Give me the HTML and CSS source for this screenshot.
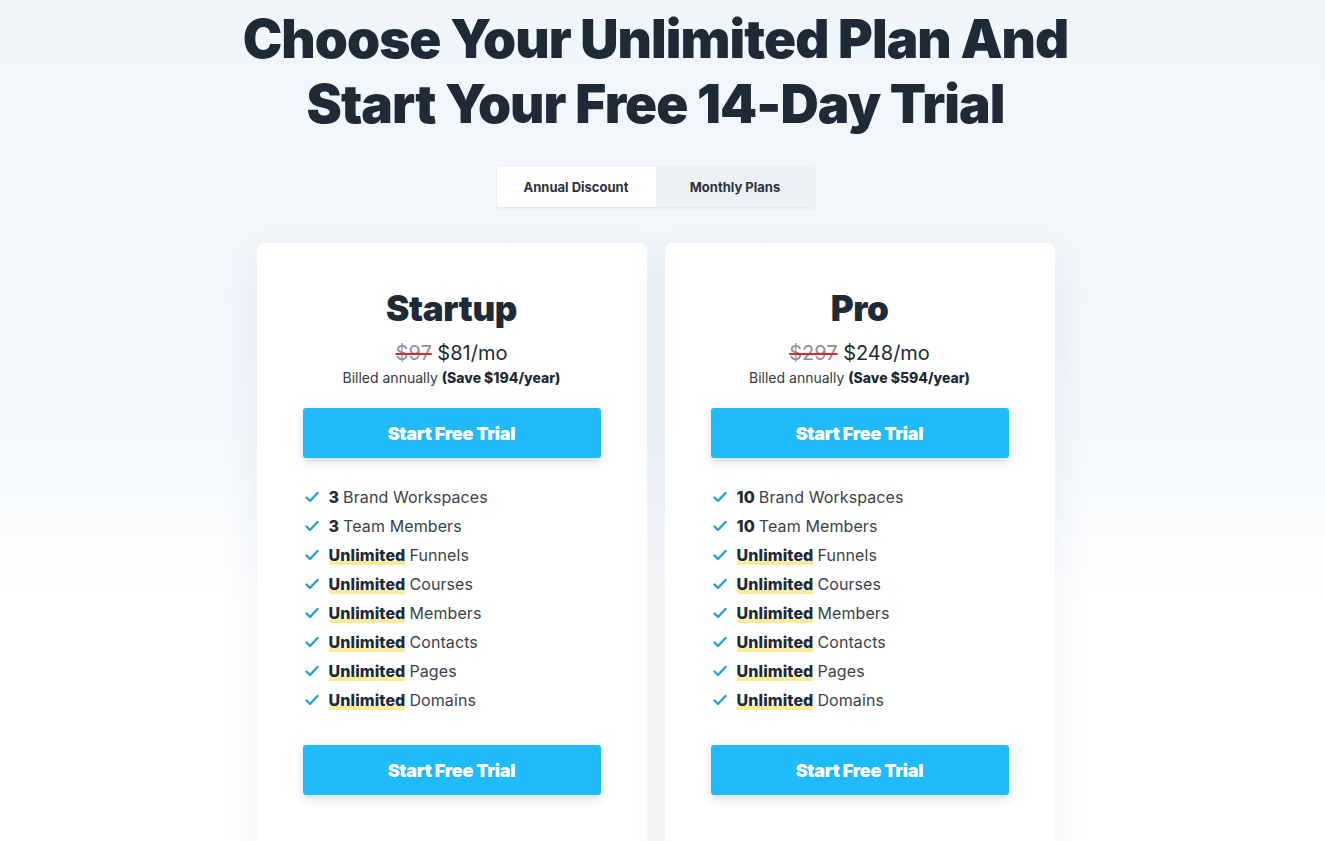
FILE: index.html
```html
<!DOCTYPE html>
<html>
<head>
<meta charset="utf-8">
<link rel="stylesheet" href="styles.css">
</head>
<body>
<div class="page">
  <h1 class="title">Choose Your Unlimited Plan And<br>Start Your Free 14-Day Trial</h1>
  <div class="toggle">
    <div class="tab active">Annual Discount</div>
    <div class="tab">Monthly Plans</div>
  </div>
  <div class="cards">
    <div class="card">
      <h2 class="plan">Startup</h2>
      <div class="price"><s class="old">$97</s> $81/mo</div>
      <div class="billed">Billed annually <b>(Save $194/year)</b></div>
      <a class="btn">Start Free Trial</a>
      <ul class="features">
        <li><svg class="chk" viewBox="0 0 14 12"><path d="M1.5 6.5 L5 10 L12.5 2" /></svg><b>3</b> Brand Workspaces</li>
        <li><svg class="chk" viewBox="0 0 14 12"><path d="M1.5 6.5 L5 10 L12.5 2" /></svg><b>3</b> Team Members</li>
        <li><svg class="chk" viewBox="0 0 14 12"><path d="M1.5 6.5 L5 10 L12.5 2" /></svg><b class="hl">Unlimited</b> Funnels</li>
        <li><svg class="chk" viewBox="0 0 14 12"><path d="M1.5 6.5 L5 10 L12.5 2" /></svg><b class="hl">Unlimited</b> Courses</li>
        <li><svg class="chk" viewBox="0 0 14 12"><path d="M1.5 6.5 L5 10 L12.5 2" /></svg><b class="hl">Unlimited</b> Members</li>
        <li><svg class="chk" viewBox="0 0 14 12"><path d="M1.5 6.5 L5 10 L12.5 2" /></svg><b class="hl">Unlimited</b> Contacts</li>
        <li><svg class="chk" viewBox="0 0 14 12"><path d="M1.5 6.5 L5 10 L12.5 2" /></svg><b class="hl">Unlimited</b> Pages</li>
        <li><svg class="chk" viewBox="0 0 14 12"><path d="M1.5 6.5 L5 10 L12.5 2" /></svg><b class="hl">Unlimited</b> Domains</li>
      </ul>
      <a class="btn">Start Free Trial</a>
    </div>
    <div class="card">
      <h2 class="plan">Pro</h2>
      <div class="price"><s class="old">$297</s> $248/mo</div>
      <div class="billed">Billed annually <b>(Save $594/year)</b></div>
      <a class="btn">Start Free Trial</a>
      <ul class="features">
        <li><svg class="chk" viewBox="0 0 14 12"><path d="M1.5 6.5 L5 10 L12.5 2" /></svg><b>10</b> Brand Workspaces</li>
        <li><svg class="chk" viewBox="0 0 14 12"><path d="M1.5 6.5 L5 10 L12.5 2" /></svg><b>10</b> Team Members</li>
        <li><svg class="chk" viewBox="0 0 14 12"><path d="M1.5 6.5 L5 10 L12.5 2" /></svg><b class="hl">Unlimited</b> Funnels</li>
        <li><svg class="chk" viewBox="0 0 14 12"><path d="M1.5 6.5 L5 10 L12.5 2" /></svg><b class="hl">Unlimited</b> Courses</li>
        <li><svg class="chk" viewBox="0 0 14 12"><path d="M1.5 6.5 L5 10 L12.5 2" /></svg><b class="hl">Unlimited</b> Members</li>
        <li><svg class="chk" viewBox="0 0 14 12"><path d="M1.5 6.5 L5 10 L12.5 2" /></svg><b class="hl">Unlimited</b> Contacts</li>
        <li><svg class="chk" viewBox="0 0 14 12"><path d="M1.5 6.5 L5 10 L12.5 2" /></svg><b class="hl">Unlimited</b> Pages</li>
        <li><svg class="chk" viewBox="0 0 14 12"><path d="M1.5 6.5 L5 10 L12.5 2" /></svg><b class="hl">Unlimited</b> Domains</li>
      </ul>
      <a class="btn">Start Free Trial</a>
    </div>
  </div>
</div>
</body>
</html>
```
FILE: styles.css
```css
html, body {
  margin: 0;
  padding: 0;
}
body {
  font-family: Inter, "Noto Sans", sans-serif;
  color: #1f2b36;
  background: linear-gradient(180deg, #f1f6fb 0px, #f3f8fc 420px, #ffffff 600px);
  min-height: 841px;
  overflow: hidden;
}
.page {
  display: flex;
  flex-direction: column;
  align-items: center;
  padding-top: 7px;
  padding-right: 14px;
}
.title {
  margin: 0;
  font-size: 53px;
  line-height: 65px;
  font-weight: 900;
  letter-spacing: -0.95px;
  text-align: center;
  color: #1e2a35;
}
.toggle {
  margin-top: 30px;
  display: flex;
  border-radius: 3px;
  box-shadow: 0 1px 3px rgba(30, 50, 80, 0.10);
  overflow: hidden;
}
.tab {
  width: 159px;
  height: 40px;
  display: flex;
  align-items: center;
  justify-content: center;
  font-size: 13px;
  font-weight: 700;
  color: #2a333c;
  background: #edf1f6;
}
.tab.active {
  background: #ffffff;
}
.cards {
  margin-top: 36px;
  display: flex;
  gap: 18px;
}
.card {
  width: 390px;
  box-sizing: border-box;
  background: #ffffff;
  border-radius: 8px;
  box-shadow: 0 10px 40px rgba(40, 70, 110, 0.08);
  padding: 44px 46px 80px;
  display: flex;
  flex-direction: column;
  align-items: stretch;
  text-align: center;
}
.plan {
  margin: 0;
  font-size: 35px;
  line-height: 42px;
  font-weight: 900;
  letter-spacing: -0.4px;
  color: #1e2a35;
}
.price {
  margin-top: 12px;
  font-size: 20px;
  line-height: 24px;
  color: #222b33;
}
.old {
  color: #8a9199;
  text-decoration-color: #d6282e;
  text-decoration-thickness: 2px;
}
.billed {
  margin-top: 4px;
  font-size: 14px;
  line-height: 18px;
  color: #333b43;
}
.billed b {
  font-weight: 800;
  color: #1e2a35;
}
.btn {
  display: flex;
  align-items: center;
  justify-content: center;
  height: 50px;
  margin-top: 21px;
  background: #1fbbfb;
  border-radius: 3px;
  box-shadow: 0 4px 8px rgba(40, 60, 90, 0.18);
  color: #ffffff;
  font-size: 18px;
  font-weight: 900;
  letter-spacing: -0.3px;
}
.features {
  list-style: none;
  margin: 24px 0 0;
  padding: 0 0 0 2px;
  text-align: left;
}
.features li {
  height: 29px;
  display: flex;
  align-items: center;
  font-size: 16px;
  color: #3a434b;
  letter-spacing: 0.1px;
}
.features li b {
  font-weight: 800;
  color: #1e2a35;
  margin-right: 4px;
}
.features li b.hl {
  background: linear-gradient(180deg, transparent 0, transparent 78%, #fcec99 78%, #fcec99 100%);
}
.chk {
  width: 14px;
  height: 12px;
  margin-right: 10px;
  fill: none;
  stroke: #2a9fd8;
  stroke-width: 2.4;
  stroke-linecap: round;
  stroke-linejoin: round;
}
.features + .btn {
  margin-top: 31px;
}
```
